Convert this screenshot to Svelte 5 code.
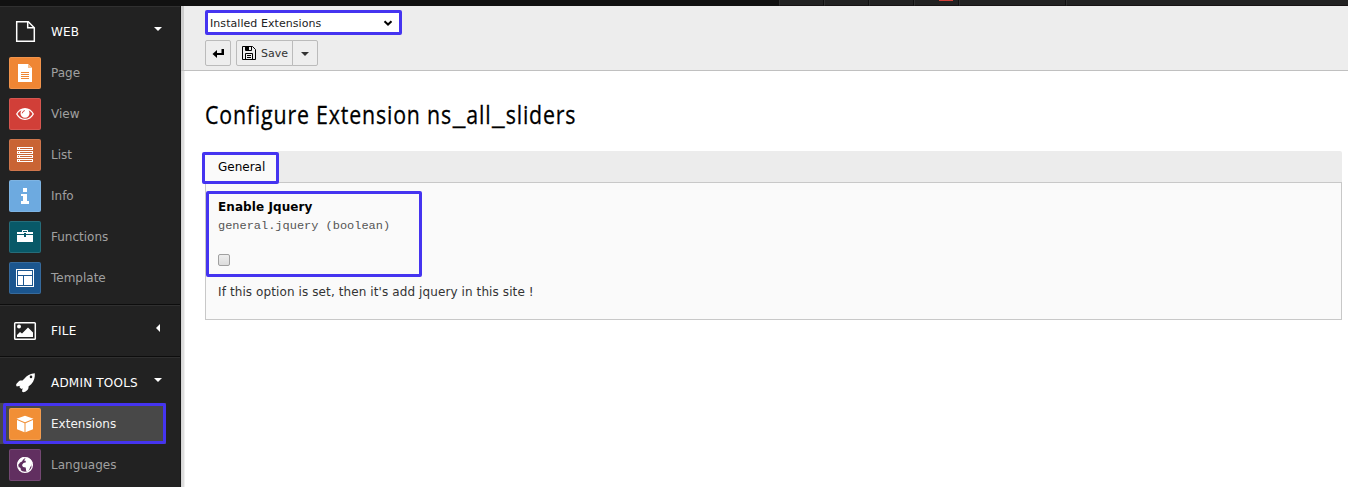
<script>
  const groups = [
    {
      label: 'WEB', icon: 'web', open: true,
      items: [
        { label: 'Page', icon: 'page', color: '#ef8634' },
        { label: 'View', icon: 'view', color: '#d13f38' },
        { label: 'List', icon: 'list', color: '#c96434' },
        { label: 'Info', icon: 'info', color: '#6daae0' },
        { label: 'Functions', icon: 'functions', color: '#085968' },
        { label: 'Template', icon: 'template', color: '#1b568f' }
      ]
    },
    { label: 'FILE', icon: 'file', open: false, items: [] },
    {
      label: 'ADMIN TOOLS', icon: 'admin', open: true,
      items: [
        { label: 'Extensions', icon: 'extensions', color: '#f18f36', active: true },
        { label: 'Languages', icon: 'languages', color: '#612f60' }
      ]
    }
  ];
  const cells = [45, 45, 45, 45, 107, 283];
</script>

{#snippet glyph(name)}
  <svg width="32" height="32" viewBox="0 0 32 32" fill="#fff">
    {#if name === 'web'}
      <path d="M7.700 5.700h11.600l6 6v13.600H7.700z" fill="none" stroke="#fff" stroke-width="1.500" />
      <path d="M18.700 5.500v6.200h6.500" fill="none" stroke="#fff" stroke-width="1.500" />
    {:else if name === 'page'}
      <path d="M9 7h10l4 4v14H9z" />
      <path d="M19 7v4h4z" fill="#f6c08f" />
      <path d="M12 15.500h8M12 17.500h8M12 19.500h8M12 21.500h8" stroke="#ef8634" />
    {:else if name === 'view'}
      <path fill-rule="evenodd" d="M7 16c2-3.800 5.200-6 9-6s7 2.200 9 6c-2 3.800-5.200 6-9 6s-7-2.200-9-6zm1.500 0c1.800 3 4.300 4.700 7.500 4.700s5.700-1.700 7.500-4.700c-.9-1.600-2.300-2.900-3.900-3.700.6.9.9 1.900.9 3a4.500 4.500 0 0 1-9 0c0-1.100.3-2.100.9-3C10.800 13.100 9.400 14.400 8.500 16z" />
      <path d="M13.300 15.300a3 3 0 0 1 2.500-2.700" fill="none" stroke="#d13f38" stroke-width="1" />
    {:else if name === 'list'}
      {#each [8, 12, 16, 20] as y}
        <path fill-rule="evenodd" d="M8 {y}h16v3H8zM9 {y + 1}v1h1v-1zM11 {y + 1}v1h12v-1z" />
      {/each}
    {:else if name === 'info'}
      <path d="M14 8h4v4h-4zM12 14h6v7h2v3h-8v-3h2v-5h-2z" />
    {:else if name === 'functions'}
      <path d="M8 11h5V9.500l.5-.5h5l.5.5V11h5v2h-7v-1h-2v1H8zM14 11h4v-1h-4zM8 14h7v2h2v-2h7v7H8z" fill-rule="evenodd" />
    {:else if name === 'template'}
      <path fill-rule="evenodd" d="M7 7h18v18H7zM8 8v16h16V8z" />
      <path d="M9 9h14v4H9zM9 14h5v9H9zM15 14h8v9h-8z" />
    {:else if name === 'file'}
      <rect x="5.700" y="7.700" width="20.600" height="16.600" rx=".8" fill="none" stroke="#fff" stroke-width="1.500" />
      <circle cx="10" cy="11.500" r="2" />
      <path d="M8 22v-2l3-3 2 1.500 6-6 5 5V22z" />
    {:else if name === 'admin'}
      <path fill-rule="evenodd" d="M25.800 6.200c.3 3.800-.6 8-3.600 11l-2.700 2.300c.4 2.400-.9 3.500-2.300 4.500-.8.500-1.500 1.200-2.700 1.300l-1.500-.8.600-3.300-1.300.9-2-2 1-1.300-3.500.7L7 18c.4-1.400 1.200-2.200 2.200-3.100 1.200-1.300 2.500-1.700 4.300-1.300l2-2.200c2.800-3.300 6.200-5 10.300-5.200zM22 8.600a1.300 1.300 0 1 0 0 2.600 1.300 1.300 0 0 0 0-2.600z" />
    {:else if name === 'extensions'}
      <path d="M16 7.700l8.500 3-8.500 3.600-8.500-3.600zM8 12l7.500 3.200v9L8 21.300zM24 12v9.300l-7.500 2.900v-9z" />
    {:else}
      <circle cx="16" cy="16" r="7.400" fill="none" stroke="#fff" stroke-width="1.300" />
      <path d="M9 13c1-3 3-4.600 6-5l.5 1.500-1.500 1.300-1 1.700-2 1-1 1.500-1.500.5zM17 8.500c3 0 5.500 2 6.300 5l-.8 3.500-1 .5-1.300 3.200-1.700 2.300-1.300-1-.5-3.500-2.700-.5-1-2 1.500-2 2.500-.7-.5-1.500-1.500-.3zM9 17.500l2.500 1.500.5 2.800-1.500-.5z" />
    {/if}
  </svg>
{/snippet}

<div class="app">
  <header class="topbar">
    {#each cells as w, i}
      <div class="cell" class:last={i === 5} style="width: {w}px">
        {#if i === 3}<span class="badge"></span>{/if}
      </div>
    {/each}
  </header>
  <div class="body">
    <nav class="menu">
      {#each groups as g}
        <section>
          <div class="group" class:closed={!g.open}>
            {@render glyph(g.icon)}
            <span class="title">{g.label}</span>
            <i class="caret" class:left={!g.open}></i>
          </div>
          {#each g.items as item}
            <div class="item" class:active={item.active}>
              <span class="tile" style="background: {item.color}">{@render glyph(item.icon)}</span>
              <span>{item.label}</span>
              {#if item.active}<b class="mark mark-item"></b>{/if}
            </div>
          {/each}
        </section>
      {/each}
    </nav>
    <div class="resizer"></div>
    <main>
      <div class="docheader">
        <div class="select">
          <span>Installed Extensions</span>
          <svg width="10" height="7" viewBox="0 0 10 7"><path d="M1.500 1.300 5 4.600l3.500-3.300" fill="none" stroke="#000" stroke-width="2" /></svg>
          <b class="mark mark-select"></b>
        </div>
        <div class="buttons">
          <button class="back" aria-label="Back">
            <svg width="16" height="16" viewBox="0 0 16 16"><path d="M11.500 4H14v6H7v3L2.500 9 7 5v3h4.500z" /></svg>
          </button>
          <button class="save">
            <svg width="16" height="16" viewBox="0 0 16 16" fill="none" stroke="#000">
              <path d="M1.500 1.500h10l3 3v10h-13zM4.500 14V8.500h7V14M4.500 2v3.500h6V2M6 10.500h4M6 12.500h4" />
              <path d="M5 2h3v3H5z" fill="#000" stroke="none" />
            </svg>
            <span>Save</span>
          </button>
          <button class="more" aria-label="More"><i></i></button>
        </div>
      </div>
      <div class="content">
        <h1><span>Configure Extension ns<u>_</u>all<u>_</u>sliders</span></h1>
        <div class="tabs">
          <div class="tab">General<b class="mark mark-tab"></b></div>
        </div>
        <div class="panel">
          <b class="mark mark-panel"></b>
          <strong>Enable Jquery</strong>
          <code>general.jquery (boolean)</code>
          <div class="check"></div>
          <p>If this option is set, then it's add jquery in this site !</p>
        </div>
      </div>
    </main>
  </div>
</div>

<style>
  :global(body) { margin: 0; overflow: hidden; }
  .app {
    width: 1348px; height: 487px; overflow: hidden; background: #fff;
    display: flex; flex-direction: column;
    font: 12px/18px "DejaVu Sans", Verdana, sans-serif; color: #333;
  }
  .app * { box-sizing: border-box; }
  .topbar { height: 6px; flex: none; display: flex; background: #111; padding-left: 779px; overflow: hidden; }
  .cell {
    flex: none; background: #222; border-left: 1px solid #303030; border-right: 1px solid #111;
    border-bottom: 1px solid #171314; display: flex;
  }
  .cell.last { border-right: 0; }
  .badge { width: 14px; height: 1px; background: #d13f38; margin-left: 24px; }
  .body { flex: 1; display: flex; min-height: 0; }
  .menu { width: 181px; flex: none; background: #222; border-right: 1px solid #171717; overflow: hidden; }
  section { border-top: 1px solid #303030; border-bottom: 1px solid #0d0d0d; padding-bottom: 6px; }
  section:nth-child(2) { padding-bottom: 0; }
  .group { height: 45px; display: flex; align-items: center; padding: 4px 17px 0 9px; color: #fff; }
  section:nth-child(n + 2) .group { padding-top: 5px; }
  .group.closed { height: 50px; padding-top: 0 !important; }
  .group span, .item > span:nth-child(2) { margin-left: 10px; }
  .title { letter-spacing: .2px; }
  svg { display: block; flex: none; }
  .caret { margin: 0 1px 5px auto; border: 4px solid transparent; border-top-color: #fff; border-bottom: 0; }
  section:nth-child(3) .caret { margin-bottom: 7px; }
  .caret.left { margin-right: 3px; margin-bottom: 6px; border: 4px solid transparent; border-right-color: #fff; border-left: 0; }
  .item { height: 41px; display: flex; align-items: center; padding-left: 9px; color: #a0a0a0; position: relative; }
  .item.active { background: linear-gradient(to right, #484848 166px, #222 166px); color: #f4f4f4; }
  .tile { width: 32px; height: 32px; border-radius: 2px; flex: none; box-shadow: inset 0 0 0 1px rgba(255, 255, 255, .12); }
  .resizer { width: 4px; flex: none; background: linear-gradient(to right, #ccc 0, #ddd 1px, #ddd 3px, #f0f0f0 3px); }
  main { flex: 1; min-width: 0; }
  .docheader { height: 65px; margin-left: -4px; background: linear-gradient(to right, #cdcdcd 3px, #ededed 3px); border-bottom: 1px solid #c0c0c0; padding: 6px 0 0 26px; }
  .select {
    width: 193px; height: 20px; background: #fff; position: relative;
    display: flex; align-items: center; justify-content: space-between;
    padding: 3px 7px 0 3px; font-size: 11px; color: #222; letter-spacing: .06px;
  }
  .buttons { display: flex; margin: 8px 0 0 -2px; }
  button { height: 26px; border: 1px solid #bbb; background: #eee; padding: 0; display: flex; align-items: center; justify-content: center; font: inherit; font-size: 11px; color: #333; }
  button span { padding-top: 2px; }
  .back { width: 26px; margin-right: 5px; border-radius: 2px; }
  .save { width: 57px; gap: 4px; border-radius: 2px 0 0 2px; }
  .more { width: 26px; margin-left: -1px; border-radius: 0 2px 2px 0; }
  .more i { border: 4px solid transparent; border-top-color: #333; border-bottom: 0; margin-top: 1px; }
  .content { padding: 0 6px 0 20px; }
  h1 { margin: 25px 0 0; height: 55px; font: 400 26px/36px "Open Sans", sans-serif; color: #000; white-space: nowrap; }
  h1 span { display: inline-block; transform-origin: 0 50%; transform: scaleX(.82); letter-spacing: 1.02px; -webkit-text-stroke: .3px #000; }
  h1 u { display: inline-block; text-decoration: none; letter-spacing: 0; margin: 0 3px; transform: scaleX(1.35); }
  .tabs { height: 31px; background: #ececec; border-radius: 0 2px 0 0; display: flex; }
  .tab { width: 73px; height: 32px; padding: 7px 0 0 13px; background: #fafafa; color: #000; position: relative; }
  .panel { height: 138px; border: 1px solid #c8c8c8; background: #fafafa; padding: 15px 12px; position: relative; }
  strong { display: block; color: #000; letter-spacing: .08px; }
  code { display: block; width: 200px; font: 10.500px/18px "Liberation Mono", monospace; color: #555; margin-top: 1px; transform: scaleX(1.138); transform-origin: 0 50%; }
  .check { width: 12px; height: 12px; margin: 19px 0 0; border: 1px solid #a0a0a0; border-radius: 2px; background: linear-gradient(#eee, #dcdcdc); }
  p { margin: 17px 0 0; letter-spacing: .1px; }
  .mark { position: absolute; border: 3px solid #4534f0; border-radius: 2px; }
  .mark-item { left: 3px; top: 0; width: 163px; height: 41px; }
  .mark-select { left: -2px; top: -2px; width: 197px; height: 25px; }
  .mark-tab { left: -3px; top: 1px; width: 77px; height: 32px; z-index: 1; }
  .mark-panel { left: 0; top: 8px; width: 216px; height: 86px; }
</style>
